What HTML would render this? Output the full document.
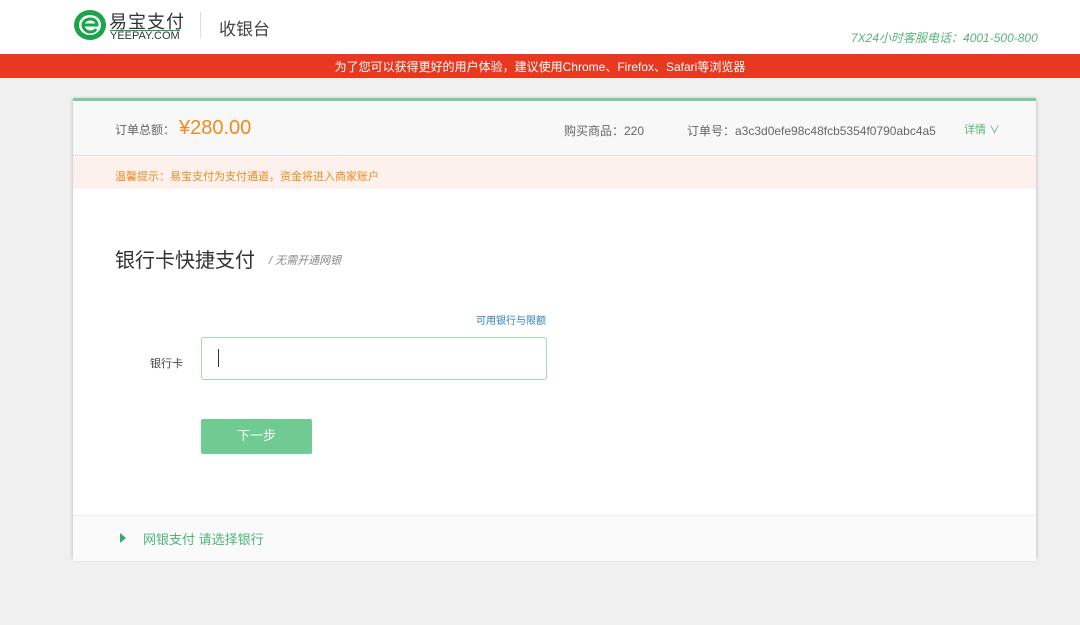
<!DOCTYPE html>
<html><head><meta charset="utf-8"><style>
*{margin:0;padding:0;box-sizing:border-box}
body{width:1080px;height:625px;background:#f0f0f0;font-family:"Liberation Sans","Noto Sans CJK SC",sans-serif;position:relative;overflow:hidden;color:#333}
.hdr{position:absolute;left:0;top:0;width:1080px;height:54px;background:#fff}
.bar{position:absolute;left:0;top:54px;width:1080px;height:24px;background:#e6391f;color:#fff;font-size:12px;text-align:center;line-height:26px}
.a{position:absolute;white-space:nowrap}
.card{position:absolute;left:73px;top:98px;width:963px;height:460px;background:#fff;box-shadow:0 1px 4px rgba(0,0,0,.25);border-top:3px solid #7dc9a0}
</style></head><body>
<div class="hdr">
<svg class="a" style="left:73px;top:9px" width="34" height="32" viewBox="0 0 34 32"><ellipse cx="17" cy="16" rx="16" ry="15" fill="#1aa54a"/><ellipse cx="17" cy="16" rx="11" ry="10" fill="#fff"/><path d="M10 16h14c0-4-3-6-7-6s-7 3-7 6 3 7 7 7c3 0 5-1 6-3" stroke="#1aa54a" stroke-width="3" fill="none"/></svg>
<div class="a" style="left:109px;top:8px;font-size:18px;color:#333;letter-spacing:1px">易宝支付</div>
<div class="a" style="left:110px;top:30px;width:70px;border-top:1px solid #1aa54a"></div>
<div class="a" style="left:110px;top:30px;font-size:11px;color:#333">YEEPAY.COM</div>
<div class="a" style="left:200px;top:12px;width:1px;height:26px;background:#ddd"></div>
<div class="a" style="left:219px;top:15px;font-size:17px;color:#444">收银台</div>
<div class="a" style="left:851px;top:29px;font-size:12px;color:#5ab47a;font-style:italic">7X24小时客服电话：4001-500-800</div>
</div>
<div class="bar">为了您可以获得更好的用户体验，建议使用Chrome、Firefox、Safari等浏览器</div>
<div class="card">
<div class="a" style="left:0;top:0;width:963px;height:55px;background:#f8f8f8;border-bottom:1px dotted #ccc"></div>
<div class="a" style="left:42px;top:20px;font-size:12px;color:#666">订单总额：</div>
<div class="a" style="left:106px;top:16px;font-size:20px;color:#f08a1e">¥280.00</div>
<div class="a" style="left:491px;top:21px;font-size:12px;color:#666">购买商品：220</div>
<div class="a" style="left:614px;top:21px;font-size:12px;color:#666">订单号：a3c3d0efe98c48fcb5354f0790abc4a5</div>
<div class="a" style="left:891px;top:20px;font-size:11px;color:#5ab47a">详情 ∨</div>
<div class="a" style="left:0;top:56px;width:963px;height:32px;background:#fdf1ee"></div>
<div class="a" style="left:42px;top:67px;font-size:11px;color:#f08a1e">温馨提示：易宝支付为支付通道，资金将进入商家账户</div>
<div class="a" style="left:42px;top:143px;font-size:20px;color:#333">银行卡快捷支付</div>
<div class="a" style="left:196px;top:151px;font-size:11px;color:#888;font-style:italic">/ 无需开通网银</div>
<div class="a" style="left:403px;top:211px;font-size:10px;color:#2a7fbf">可用银行与限额</div>
<div class="a" style="left:77px;top:254px;font-size:11px;color:#444">银行卡</div>
<div class="a" style="left:128px;top:236px;width:346px;height:43px;border:1px solid #9fd9b5;border-radius:3px"></div>
<div class="a" style="left:145px;top:248px;width:1px;height:18px;background:#333"></div>
<div class="a" style="left:128px;top:318px;width:111px;height:35px;background:#6fcb92;border-radius:2px;color:#fff;font-size:13px;text-align:center;line-height:33px">下一步</div>
<div class="a" style="left:0;top:414px;width:963px;height:46px;background:#fafafa;border-top:1px solid #eee"></div>
<div class="a" style="left:47px;top:432px;width:0;height:0;border-left:6px solid #3aa86a;border-top:5px solid transparent;border-bottom:5px solid transparent"></div>
<div class="a" style="left:70px;top:428px;font-size:13px;color:#4fb47a">网银支付 请选择银行</div>
</div>
</body></html>
